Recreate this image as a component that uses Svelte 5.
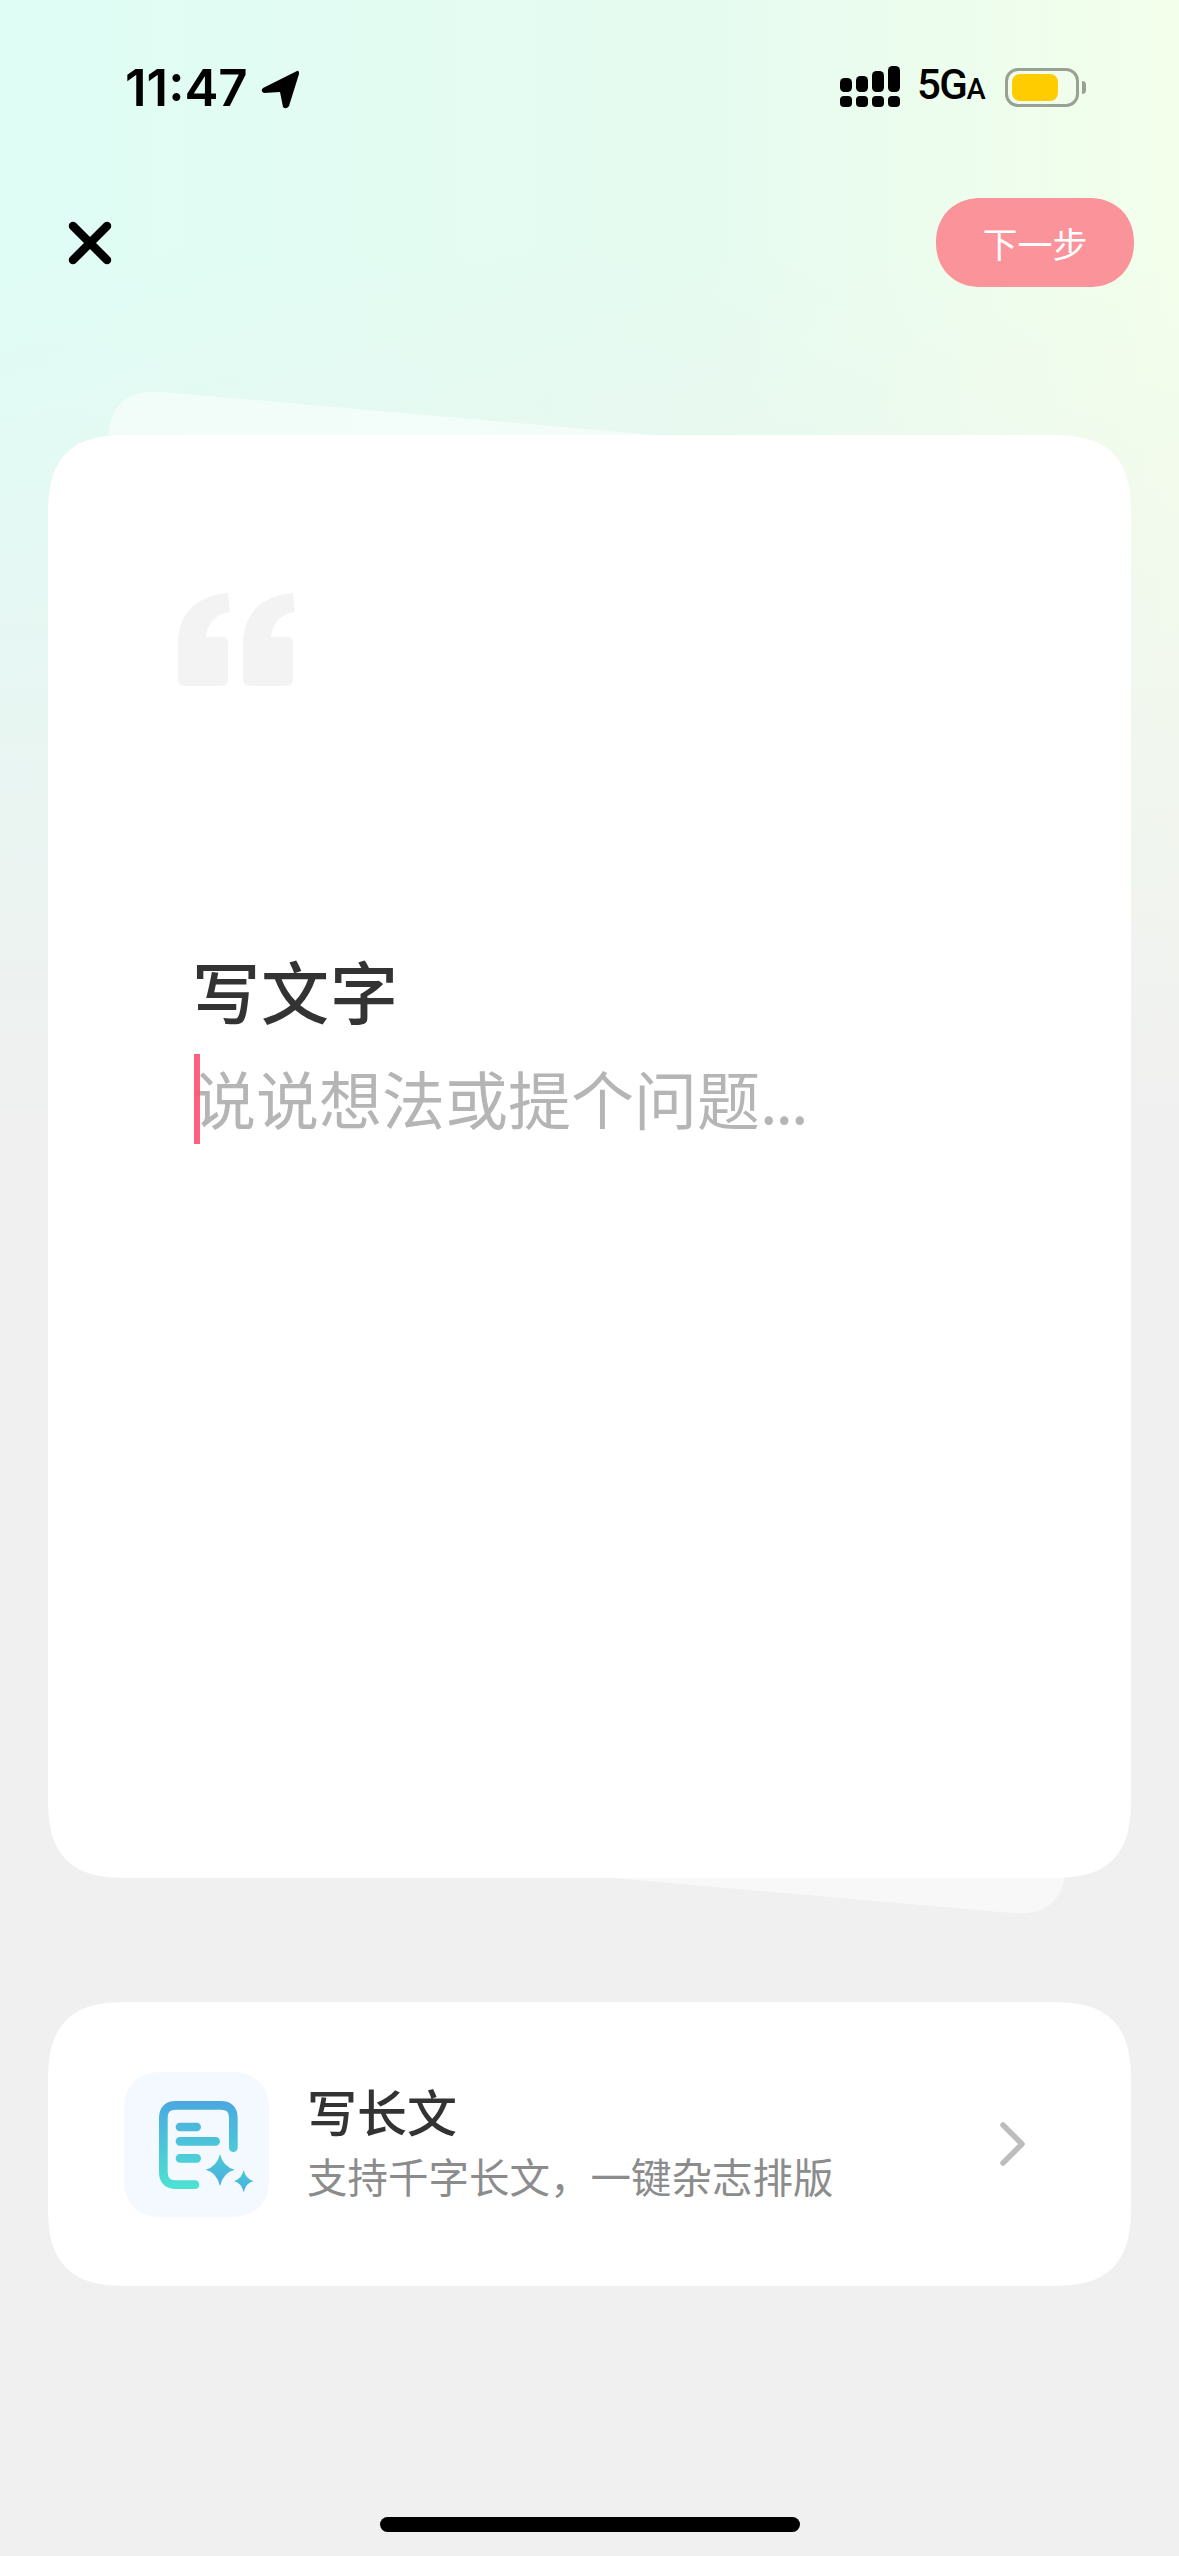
<script>
  const longTitle = '写长文';
  const longDesc = '支持千字长文，一键杂志排版';
</script>

<div class="page">
  <div class="status">
    <div class="time-wrap">
      <span class="time">11:47</span>
      <svg class="arrow" width="42" height="42" viewBox="0 0 42 42">
        <path d="M38 3 L4 20 Q1 23 5 25 L21 24 L24 39 Q27 42 30 38 L40 6 Q40 2 38 3 Z" fill="#000" />
      </svg>
    </div>
    <div class="status-right">
      <svg class="signal" width="60" height="42" viewBox="0 0 60 42">
        <rect x="0" y="12" width="12" height="14" rx="4.5" />
        <rect x="16" y="10" width="12" height="16" rx="4.5" />
        <rect x="32" y="5" width="12" height="21" rx="4.5" />
        <rect x="48" y="0" width="12" height="26" rx="4.5" />
        <rect x="0" y="30" width="12" height="11" rx="4" />
        <rect x="16" y="30" width="12" height="11" rx="4" />
        <rect x="32" y="30" width="12" height="11" rx="4" />
        <rect x="48" y="30" width="12" height="11" rx="4" />
      </svg>
      <span class="net">5G<small>A</small></span>
      <div class="battery"><div class="level"></div></div>
      <div class="nub"></div>
    </div>
  </div>

  <div class="nav">
    <svg class="close" width="44" height="44" viewBox="0 0 44 44">
      <path d="M5 5 L39 39 M39 5 L5 39" stroke="#000" stroke-width="8.5" stroke-linecap="round" />
    </svg>
    <div class="next">下一步</div>
  </div>

  <div class="stack">
    <div class="back-card"></div>
    <div class="main-card">
      <svg class="quote" width="116" height="93" viewBox="0 0 116 93">
        <path d="M50 0 L52 19 C38 21 29 30 28 44 L44 44 Q50 44 50 50 L50 86 Q50 93 43 93 L7 93 Q0 93 0 86 L0 52 C0 20 18 3 50 0 Z" fill="#f3f3f3" />
        <path d="M115 0 L117 19 C103 21 94 30 93 44 L109 44 Q115 44 115 50 L115 86 Q115 93 108 93 L72 93 Q65 93 65 86 L65 52 C65 20 83 3 115 0 Z" fill="#f3f3f3" />
      </svg>
      <div class="title">写文字</div>
      <div class="input">
        <span class="caret"></span>
        <span class="placeholder">说说想法或提个问题<span class="dots">...</span></span>
      </div>
    </div>
  </div>

  <div class="long-card">
    <div class="icon-box">
      <svg width="145" height="145" viewBox="72 65 435 435">
        <defs>
          <linearGradient id="docGrad" gradientUnits="userSpaceOnUse" x1="0" y1="152" x2="0" y2="416">
            <stop offset="0" stop-color="#4aa8e0" />
            <stop offset="1" stop-color="#4de2d2" />
          </linearGradient>
          <linearGradient id="starGrad" x1="0" y1="0" x2="0" y2="1">
            <stop offset="0" stop-color="#4cc8d4" />
            <stop offset="1" stop-color="#47aee2" />
          </linearGradient>
        </defs>
        <path d="M285 403 L228 403 Q190 403 190 365 L190 203 Q190 165 228 165 L362 165 Q400 165 400 203 L400 292" fill="none" stroke="url(#docGrad)" stroke-width="26" stroke-linecap="round" />
        <path d="M240 230 L290 230 M240 273 L347 273 M240 324 L290 324" fill="none" stroke="url(#docGrad)" stroke-width="26" stroke-linecap="round" />
        <path d="M360 311 Q369 349 404 358 Q369 367 360 407 Q351 367 317 358 Q351 349 360 311 Z" fill="url(#starGrad)" />
        <path d="M431 359 Q437 386 461 392 Q437 398 431 426 Q425 398 402 392 Q425 386 431 359 Z" fill="url(#starGrad)" />
      </svg>
    </div>
    <div class="long-text">
      <div class="long-title">{longTitle}</div>
      <div class="long-desc">{longDesc}</div>
    </div>
    <svg class="chevron" width="26" height="44" viewBox="0 0 26 44">
      <path d="M3 3 L22 22 L3 41" fill="none" stroke="#bdbdbd" stroke-width="5.5" stroke-linecap="round" stroke-linejoin="round" />
    </svg>
  </div>

  <div class="home-bar"></div>
</div>

<style>
  :global(body) {
    margin: 0;
    background: #f0f0f0;
  }

  .page {
    position: relative;
    width: 1179px;
    height: 2556px;
    overflow: hidden;
    display: flex;
    flex-direction: column;
    font-family: "Noto Sans CJK SC", "Noto Sans", sans-serif;
    background:
      linear-gradient(to bottom, rgba(240, 240, 240, 0) 0, rgba(240, 240, 240, 0) 250px, #f0f0f0 1130px),
      linear-gradient(90deg, #dffdf5 0%, #e6fbf0 60%, #f3ffeb 100%);
  }

  .status {
    height: 136px;
    padding: 58px 93px 0 125px;
    box-sizing: border-box;
    display: flex;
    justify-content: space-between;
    align-items: flex-start;
  }

  .time-wrap {
    display: flex;
    align-items: center;
    gap: 11px;
  }

  .time {
    font-family: Inter, sans-serif;
    font-weight: 600;
    font-size: 51px;
    line-height: 60px;
    color: #000;
  }

  .arrow {
    margin-top: 2px;
  }

  .status-right {
    display: flex;
    align-items: center;
    margin-top: 6px;
  }

  .signal {
    margin-left: -2px;
  }

  .net {
    font-family: Roboto, sans-serif;
    font-weight: 500;
    font-size: 42px;
    line-height: 42px;
    color: #000;
    margin-left: 17px;
    width: 71px;
    letter-spacing: -1.5px;
  }

  .net small {
    font-size: 29px;
  }

  .battery {
    width: 74px;
    height: 39px;
    margin-left: 17px;
    box-sizing: border-box;
    border: 3px solid #9aa093;
    border-radius: 13px;
    padding: 3px 18px 3px 4px;
  }

  .level {
    height: 100%;
    background: #ffcc00;
    border-radius: 8px;
  }

  .nub {
    width: 4px;
    height: 13px;
    margin-left: 3px;
    background: #9aa093;
    border-radius: 0 4px 4px 0;
  }

  .nav {
    height: 89px;
    margin-top: 62px;
    padding: 0 45px 0 68px;
    display: flex;
    justify-content: space-between;
    align-items: center;
  }

  .next {
    width: 198px;
    height: 89px;
    border-radius: 45px;
    corner-shape: superellipse(1.1);
    background: #fb939a;
    color: #fff;
    font-size: 35px;
    display: flex;
    align-items: center;
    justify-content: center;
  }

  .stack {
    position: relative;
    margin: 148px 48px 0;
    height: 1443px;
  }

  /* skewed sheet peeking out behind the card */
  .back-card {
    position: absolute;
    left: 60px;
    top: -6px;
    width: 958px;
    height: 1447px;
    border-radius: 60px;
    corner-shape: superellipse(1.4);
    background: rgba(255, 255, 255, 0.5);
    transform: skewY(5deg);
  }

  .main-card {
    position: relative;
    height: 100%;
    box-sizing: border-box;
    padding: 158px 0 0 130px;
    background: #fff;
    border-radius: 84px;
    corner-shape: superellipse(1.5);
  }

  .quote {
    display: block;
    overflow: visible;
  }

  .title {
    margin: 264px 0 0 14px;
    font-size: 68px;
    font-weight: 500;
    line-height: 80px;
    letter-spacing: 1px;
    color: #333;
  }

  .input {
    position: relative;
    margin: 22px 0 0 15px;
    font-size: 63px;
    line-height: 90px;
    color: #b5b5b5;
  }

  .dots {
    letter-spacing: -2px;
  }

  .caret {
    position: absolute;
    left: 1px;
    top: 2px;
    width: 6px;
    height: 90px;
    background: rgba(255, 82, 112, 0.92);
  }

  .long-card {
    margin: 124px 48px 0;
    height: 284px;
    box-sizing: border-box;
    padding-left: 76px;
    padding-right: 105px;
    display: flex;
    align-items: center;
    background: #fff;
    border-radius: 84px;
    corner-shape: superellipse(1.5);
  }

  .icon-box {
    width: 145px;
    height: 145px;
    border-radius: 40px;
    corner-shape: superellipse(1.3);
    background: #f4f8ff;
    margin-right: 38px;
  }

  .icon-box svg {
    display: block;
  }

  .long-text {
    flex: 1;
  }

  .long-title {
    font-size: 50px;
    font-weight: 500;
    line-height: 60px;
    color: #333;
    position: relative;
    top: -4px;
  }

  .long-desc {
    margin-top: 4px;
    font-size: 40.5px;
    line-height: 56px;
    color: #8c8c8c;
  }

  .home-bar {
    position: absolute;
    left: 380px;
    bottom: 24px;
    width: 420px;
    height: 15px;
    border-radius: 8px;
    background: #000;
  }
</style>
